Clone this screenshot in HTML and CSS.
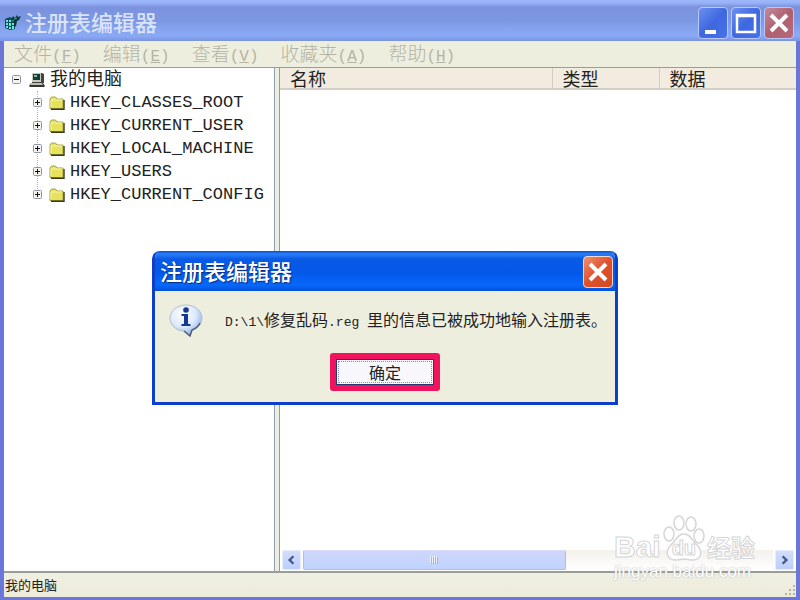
FILE: index.html
```html
<!DOCTYPE html>
<html lang="zh-CN">
<head>
    <meta charset="UTF-8">
    <meta name="viewport" content="width=device-width, initial-scale=1.0">
    <title>注册表编辑器</title>
    <link rel="stylesheet" href="styles.css">
</head>
<body>
    <!-- Shared icons -->
    <svg class="defs" width="0" height="0" aria-hidden="true">
        <symbol id="plus" viewBox="0 0 9 9">
            <rect x="0.5" y="0.5" width="8" height="8" rx="1" fill="#f4f3ee" stroke="#8c98a8"/>
            <path d="M2 4.5h5M4.5 2v5" stroke="#111"/>
        </symbol>
        <symbol id="folder" viewBox="0 0 16 14">
            <path d="M1 12V3l1.500-2h4l1.500 2h6v9.500H1z" fill="#e6e25c" stroke="#a5a04a"/>
            <path d="M2 11V4h11" fill="none" stroke="#f8f6b0"/>
            <path d="M15 4v9.300H2" fill="none" stroke="#3c3a18" stroke-width="1.400"/>
        </symbol>
        <symbol id="cross" viewBox="0 0 20 20">
            <path d="M2 2L18 18M18 2L2 18" stroke="#fff" stroke-width="4"/>
        </symbol>
    </svg>

    <div class="window">
        <header class="titlebar">
            <svg class="app-icon" viewBox="0 0 17 17" width="17" height="17">
                <path d="M1 5l5-2 5 3v9l-5 1-5-2z" fill="#0c4f55"/>
                <path d="M2 6h2v2H2zM5 6h2v2H5zM2 9h2v2H2zM5 9h2v3H5zM8 9h2v2H8zM2 12h2v2H2zM5 13h2v2H5zM8 12h2v3H8z" fill="#6fe6e0"/>
                <path d="M7 6l2-4 2 2 2-3 1 2 3-1-2 4-2 1-1 5-2 1V7z" fill="#123638"/>
                <path d="M10 5l3-1M8 7l2-1" stroke="#35a7a2"/>
            </svg>
            <h1>注册表编辑器</h1>
            <div class="controls">
                <button class="control" aria-label="最小化">
                    <svg viewBox="0 0 28 28"><path d="M6 23h11" stroke="#fff" stroke-width="4"/></svg>
                </button>
                <button class="control" aria-label="最大化">
                    <svg viewBox="0 0 28 28"><path d="M5 6h18v17H5zM5 7h18" fill="none" stroke="#fff" stroke-width="2.500"/></svg>
                </button>
                <button class="control control-close" aria-label="关闭">
                    <svg class="cross"><use href="#cross"/></svg>
                </button>
            </div>
        </header>

        <nav class="menu">
            <button>文件<span>(<u>F</u>)</span></button>
            <button>编辑<span>(<u>E</u>)</span></button>
            <button>查看<span>(<u>V</u>)</span></button>
            <button>收藏夹<span>(<u>A</u>)</span></button>
            <button>帮助<span>(<u>H</u>)</span></button>
        </nav>

        <main class="panes">
            <div class="tree">
                <div class="row root">
                    <svg class="toggle" viewBox="0 0 9 9">
                        <rect x="0.5" y="0.5" width="8" height="8" rx="1" fill="#f4f3ee" stroke="#8c98a8"/>
                        <path d="M2 4.500h5" stroke="#111"/>
                    </svg>
                    <svg class="computer" viewBox="0 0 17 16">
                        <path d="M3 1h10l2 1v9H3z" fill="#444"/>
                        <path d="M3 1h9v9H3z" fill="#c9c9c0"/>
                        <path d="M4 2h7v6H4z" fill="#143c3a"/>
                        <path d="M5 3h3v2H5z" fill="#7fc0a8"/>
                        <path d="M2 11h12l2 3-1 1H1l-1-1z" fill="#333"/>
                        <path d="M2 11h11l1 2H1z" fill="#bdbdb4"/>
                    </svg>
                    <span>我的电脑</span>
                </div>
                <ul>
                    <li class="row"><svg class="toggle"><use href="#plus"/></svg><svg class="folder"><use href="#folder"/></svg>HKEY_CLASSES_ROOT</li>
                    <li class="row"><svg class="toggle"><use href="#plus"/></svg><svg class="folder"><use href="#folder"/></svg>HKEY_CURRENT_USER</li>
                    <li class="row"><svg class="toggle"><use href="#plus"/></svg><svg class="folder"><use href="#folder"/></svg>HKEY_LOCAL_MACHINE</li>
                    <li class="row"><svg class="toggle"><use href="#plus"/></svg><svg class="folder"><use href="#folder"/></svg>HKEY_USERS</li>
                    <li class="row"><svg class="toggle"><use href="#plus"/></svg><svg class="folder"><use href="#folder"/></svg>HKEY_CURRENT_CONFIG</li>
                </ul>
            </div>

            <div class="list">
                <table>
                    <thead>
                        <tr><th class="name">名称</th><th class="type">类型</th><th>数据</th></tr>
                    </thead>
                </table>
                <div class="scrollbar">
                    <button class="arrow" aria-label="向左滚动">
                        <svg viewBox="0 0 18 18"><path d="M11 5L7 9l4 4" fill="none" stroke="#44588c" stroke-width="2.500"/></svg>
                    </button>
                    <div class="track">
                        <div class="thumb">
                            <svg viewBox="0 0 9 8" width="9" height="8">
                                <path d="M0.500 0v7M2.500 0v7M4.500 0v7M6.500 0v7" stroke="#eef4ff"/>
                                <path d="M1.500 1v7M3.500 1v7M5.500 1v7M7.500 1v7" stroke="#9db4ea"/>
                            </svg>
                        </div>
                    </div>
                    <button class="arrow" aria-label="向右滚动">
                        <svg viewBox="0 0 18 18"><path d="M7 5l4 4-4 4" fill="none" stroke="#44588c" stroke-width="2.500"/></svg>
                    </button>
                </div>
            </div>
        </main>

        <footer class="status">
            <span>我的电脑</span>
            <svg viewBox="0 0 12 12" width="12" height="12">
                <path d="M9 0h2v2H9zM5 4h2v2H5zM9 4h2v2H9zM1 8h2v2H1zM5 8h2v2H5zM9 8h2v2H9z" fill="#b9b5a2"/>
            </svg>
        </footer>
    </div>

    <!-- Import result message -->
    <div class="dialog" role="dialog" aria-labelledby="dialog-title">
        <div class="dialog-title">
            <h2 id="dialog-title">注册表编辑器</h2>
            <button class="control dialog-close" aria-label="关闭">
                <svg class="cross"><use href="#cross"/></svg>
            </button>
        </div>
        <div class="dialog-body">
            <div class="message">
                <svg viewBox="0 0 34 34" width="34" height="34">
                    <defs>
                        <radialGradient id="bubble" cx="40%" cy="30%" r="75%">
                            <stop offset="0" stop-color="#fff"/>
                            <stop offset="0.550" stop-color="#dce9fb"/>
                            <stop offset="1" stop-color="#7fa5de"/>
                        </radialGradient>
                    </defs>
                    <path d="M17 1c9 0 16 6 16 13 0 6-4 10-10 12l-2 6-6-5C7 27 1 21 1 14S8 1 17 1z" fill="url(#bubble)" stroke="#b4bfd0"/>
                    <path d="M31 19c-2 4-5 6-8 7l-2 6-6-5" fill="none" stroke="#4c5c78" stroke-width="1.500"/>
                    <circle cx="17" cy="6" r="2.800" fill="#123a94"/>
                    <path d="M12.500 10H19v10h2.500v2h-9v-2H15v-8h-2.500z" fill="#123a94"/>
                </svg>
                <p><span>D:\1\</span>修复乱码<span>.reg </span>里的信息已被成功地输入注册表。</p>
            </div>
            <div class="highlight">
                <button class="ok">确定</button>
            </div>
        </div>
    </div>

    <div class="watermark">
        <div class="brand">
            <span>Bai</span>
            <div class="paw">
                <svg viewBox="0 0 44 48" width="44" height="48">
                    <g fill="#fff" stroke="#d6d6d6" stroke-width="1.500">
                        <ellipse cx="7" cy="20" rx="5" ry="7"/>
                        <ellipse cx="17" cy="9" rx="5" ry="7"/>
                        <ellipse cx="29" cy="10" rx="5" ry="7"/>
                        <ellipse cx="37" cy="22" rx="5" ry="7"/>
                        <path d="M22 20c7 0 8 7 13 11 7 7 3 15-4 15-4 0-6-1-9-1s-5 1-9 1c-7 0-11-8-4-15 5-4 6-11 13-11z"/>
                    </g>
                </svg>
                <span>du</span>
            </div>
            <span class="cn">经验</span>
        </div>
        <div class="site">jingyan.baidu.com</div>
    </div>
</body>
</html>
```
FILE: styles.css
```css
* {
    margin: 0;
    padding: 0;
    box-sizing: border-box;
}

body {
    position: relative;
    height: 100vh;
    overflow: hidden;
    font-family: "Noto Sans CJK SC", sans-serif;
    font-size: 18px;
    color: #222;
}

button {
    border: none;
    background: none;
    font: inherit;
    color: inherit;
}

svg {
    flex: none;
}

.defs {
    position: absolute;
}

.window {
    display: flex;
    flex-direction: column;
    height: 100%;
    border: solid #6a76d8;
    border-width: 0 4px 3px;
    background: #eeeedf;
}

.titlebar {
    display: flex;
    align-items: center;
    height: 41px;
    flex: none;
    margin: 0 -4px;
    padding: 4px 6px 0 4px;
    background: linear-gradient(#9db8fc 0, #97b1f8 3px, #7b93de 7px, #7c97e2 20px, #86a4f0 30px, #8aaaf5 36px, #7b93e0 41px);
}

.titlebar h1 {
    flex: 1;
    margin-left: 4px;
    padding-bottom: 4px;
    font-size: 22px;
    font-weight: 500;
    line-height: 32px;
    color: #dbe3fa;
}

.controls {
    display: flex;
    gap: 3px;
}

.control {
    display: flex;
    align-items: center;
    justify-content: center;
    width: 30px;
    height: 32px;
    border: 1px solid #b8c8f8;
    border-radius: 4px;
    background: linear-gradient(135deg, #6c8ff0, #3f68e0 50%, #4672ea);
}

.control svg {
    width: 28px;
    height: 28px;
}

.control-close {
    background: linear-gradient(135deg, #c08aa0, #b0606e 50%, #b46a7c);
}

.control .cross {
    width: 20px;
    height: 20px;
}

.menu {
    display: flex;
    gap: 22px;
    flex: none;
    height: 26px;
    padding-left: 10px;
    color: #b5b4a4;
}

.menu button {
    font-size: 19px;
    font-weight: 300;
    line-height: 24px;
}

.menu span {
    font-family: "Liberation Mono", monospace;
    font-size: 16px;
}

.panes {
    display: flex;
    flex: 1;
    min-height: 0;
    border-top: 1px solid #8e9cb4;
    border-bottom: 2px solid #9a9c98;
}

.tree {
    width: 271px;
    flex: none;
    border-right: 1px solid #8e9cb4;
    background: #fff;
}

.row {
    display: flex;
    align-items: center;
    height: 23px;
}

.root {
    padding-left: 8px;
}

.root span {
    padding-bottom: 4px;
    line-height: 19px;
}

.toggle {
    width: 9px;
    height: 9px;
}

.computer {
    width: 17px;
    height: 16px;
    margin: 0 4px 0 8px;
}

.tree ul {
    list-style: none;
    height: 104px;
    margin-left: 33px;
    border-left: 1px dotted #b4b4b4;
}

.tree li {
    margin-left: -5px;
    font-family: "Liberation Mono", monospace;
    font-size: 17px;
    line-height: 19px;
}

.folder {
    width: 16px;
    height: 14px;
    margin: 0 5px 0 7px;
}

.list {
    display: flex;
    flex-direction: column;
    flex: 1;
    margin-left: 4px;
    border-left: 1px solid #8e9cb4;
    background: #fff;
}

table {
    width: 100%;
    table-layout: fixed;
    border-collapse: collapse;
}

th {
    height: 21px;
    padding-left: 10px;
    background: #f1ecdf;
    border-bottom: 2px solid #d3cec4;
    font-weight: 400;
    line-height: 19px;
    text-align: left;
}

th + th {
    border-left: 1px solid #d3cec0;
}

.name {
    width: 272px;
}

.type {
    width: 107px;
}

.scrollbar {
    display: flex;
    gap: 2px;
    height: 20px;
    margin: auto 2px 1px;
    background: #fdfcfb;
}

.arrow {
    width: 19px;
    border: 1px solid #e4ecff;
    border-radius: 2px;
    background: linear-gradient(#d3ddfc, #bccffa);
}

.arrow svg {
    display: block;
    width: 17px;
    height: 18px;
}

.track {
    flex: 1;
    background: linear-gradient(#f4f1ec, #fff);
}

.thumb {
    display: flex;
    align-items: center;
    justify-content: center;
    width: 56%;
    height: 20px;
    border: 1px solid #a9bdf0;
    border-top-color: #d9dcf8;
    border-radius: 2px;
    background: linear-gradient(#cfd6fb, #c0d4fe);
}

.status {
    display: flex;
    align-items: center;
    justify-content: space-between;
    flex: none;
    height: 24px;
    padding-left: 1px;
    background: linear-gradient(#f0f0e2, #eceadb);
    font-size: 13px;
    line-height: 22px;
}

.status svg {
    align-self: flex-end;
}

.dialog {
    position: absolute;
    top: 251px;
    left: 152px;
    width: 466px;
    border: solid #0d3fcb;
    border-width: 0 3px 3px;
    border-radius: 8px 8px 0 0;
    background: #eeeedf;
    overflow: hidden;
}

.dialog-title {
    display: flex;
    align-items: center;
    justify-content: space-between;
    height: 40px;
    margin: 0 -3px;
    padding: 2px 5px 0 8px;
    background: linear-gradient(#0a4ad0 0, #2a80f8 3px, #0a5ae4 8px, #0458e8 22px, #0668fb 34px, #0450d8 40px);
}

.dialog-title h2 {
    padding-bottom: 4px;
    font-size: 22px;
    font-weight: 500;
    line-height: 32px;
    color: #fff;
    text-shadow: 1px 1px 1px #0a2a80;
}

.dialog-close {
    border-color: #f4d8d0;
    background: linear-gradient(135deg, #f09070, #e0502c 50%, #d04a22);
}

.dialog-body {
    padding: 12px 14px 11px;
}

.message {
    display: flex;
    align-items: center;
    gap: 22px;
    height: 36px;
    white-space: nowrap;
}

.message p {
    font-size: 16px;
    line-height: 36px;
}

.message span {
    font-family: "Liberation Mono", monospace;
    font-size: 13px;
    white-space: pre;
}

.highlight {
    width: 110px;
    margin: 14px auto 0;
    padding: 6px;
    border-radius: 3px;
    background: #f0145e;
}

.ok {
    display: block;
    width: 98px;
    height: 26px;
    border: 1px solid #23386e;
    outline: 1px dotted #7a8cc0;
    outline-offset: -3px;
    background: #f8f8fc;
    font-size: 16px;
    line-height: 24px;
}

.watermark {
    position: absolute;
    right: 45px;
    bottom: 18px;
    width: 141px;
    color: #fff;
    font-family: "Liberation Sans", sans-serif;
    white-space: nowrap;
    -webkit-text-stroke: 1px #d6d6d6;
}

.brand {
    display: flex;
    align-items: flex-end;
    justify-content: space-between;
    font-size: 30px;
    font-weight: bold;
    line-height: 30px;
}

.paw {
    position: relative;
    height: 48px;
}

.paw span {
    position: absolute;
    left: 0;
    bottom: 4px;
    width: 44px;
    font-size: 20px;
    line-height: 20px;
    text-align: center;
}

.cn {
    font-family: "Noto Sans CJK SC", sans-serif;
    font-size: 24px;
}

.site {
    font-size: 17px;
    line-height: 20px;
    -webkit-text-stroke: 0;
    text-shadow: 0 0 2px #aaa;
}
```
